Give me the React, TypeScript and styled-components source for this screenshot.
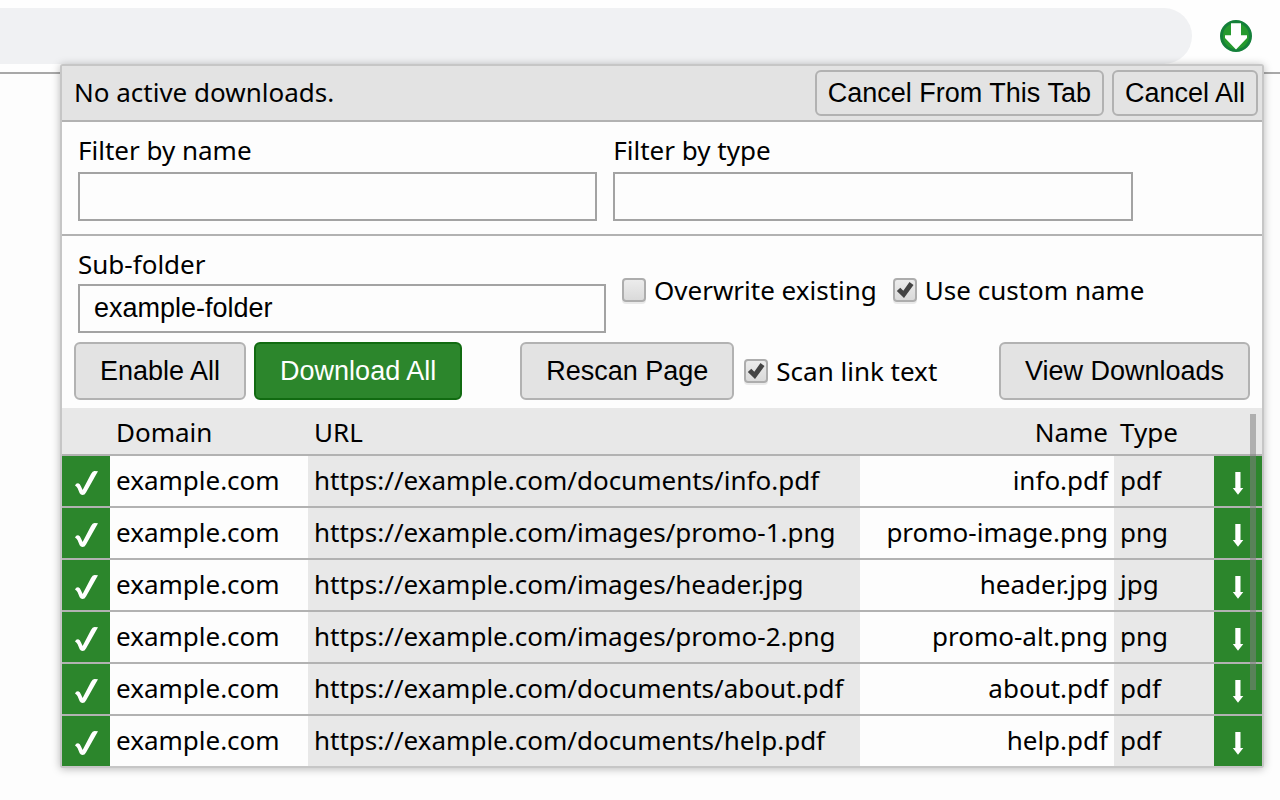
import React from "react";
import styled, { createGlobalStyle } from "styled-components";

const line = "#b2b2b2";
const green = "#2c862c";
const uiFont = '"Noto Sans", "Open Sans", sans-serif';
const controlFont = '"Liberation Sans", Arial, sans-serif';

const GlobalStyle = createGlobalStyle`
  *, *::before, *::after { box-sizing: border-box; }
  body {
    margin: 0;
    background: #fdfdfd;
    color: #000;
    font: 26px/32px ${uiFont};
  }
`;

const BrowserBar = styled.header`
  display: flex;
  align-items: center;
  justify-content: space-between;
  height: 74px;
  padding-right: 28px;
  border-bottom: 2px solid #a8a8a8;
  background: #fefefe;
`;

const AddressBar = styled.div`
  flex: 1;
  height: 56px;
  margin-right: 28px;
  border-radius: 0 28px 28px 0;
  background: #f0f1f3;
`;

const ExtensionButton = styled.button`
  display: flex;
  padding: 0;
  border: 0;
  background: none;
`;

const Popup = styled.main`
  position: relative;
  margin: -10px 16px 32px 60px;
  border: 2px solid #c6c6c6;
  border-radius: 3px;
  background: #fdfdfd;
  box-shadow: 0 1px 8px rgba(0, 0, 0, 0.28);
`;

const StatusBar = styled.section`
  display: flex;
  align-items: center;
  gap: 8px;
  height: 56px;
  padding: 0 4px 0 12px;
  border-bottom: 2px solid ${line};
  background: #e3e3e3;
`;

const StatusText = styled.span`
  flex: 1;
  padding-bottom: 2px;
`;

const Button = styled.button<{ $primary?: boolean; $compact?: boolean }>`
  height: ${(p) => (p.$compact ? 46 : 58)}px;
  padding: 0 ${(p) => (p.$compact ? 11 : 24)}px;
  border: 2px solid ${(p) => (p.$primary ? "#116b11" : line)};
  border-radius: 6px;
  background: ${(p) => (p.$primary ? green : "#e3e3e3")};
  color: ${(p) => (p.$primary ? "#fff" : "#000")};
  font: 27px/32px ${controlFont};
  white-space: nowrap;
`;

const Filters = styled.section`
  display: grid;
  grid-template-columns: 16fr 16fr 3fr;
  gap: 16px;
  padding: 12px 16px 13px;
  border-bottom: 2px solid ${line};
`;

const Field = styled.label<{ $gap: number }>`
  display: flex;
  flex-direction: column;
  gap: ${(p) => p.$gap}px;
`;

const TextInput = styled.input`
  width: 100%;
  height: 49px;
  padding: 0 14px;
  border: 2px solid #a3a3a3;
  border-radius: 0;
  background: #fdfdfd;
  color: #000;
  font: 27px/32px ${controlFont};
`;

const Options = styled.section`
  display: grid;
  gap: 9px;
  padding: 12px 12px 8px;
`;

const FolderRow = styled.div`
  display: grid;
  grid-template-columns: 11fr 13fr;
  align-items: center;
  gap: 16px;
  padding: 0 4px;
`;

const CheckGroup = styled.div`
  display: flex;
  gap: 16px;
  padding-bottom: 2px;
`;

const ActionRow = styled.div`
  display: flex;
  align-items: center;
`;

const ButtonGroup = styled.div`
  display: flex;
  gap: 8px;
  margin-right: 58px;
`;

const ScanGroup = styled.div`
  display: flex;
  flex: 1;
  align-items: center;
  gap: 10px;
`;

const CheckLabel = styled.label`
  display: flex;
  align-items: center;
  gap: 8px;
  white-space: nowrap;
`;

const CheckFrame = styled.span`
  display: grid;
  place-items: center;
  > * { grid-area: 1 / 1; }
  > svg { pointer-events: none; visibility: hidden; }
  > input:checked + svg { visibility: visible; }
`;

const Checkbox = styled.input`
  appearance: none;
  width: 24px;
  height: 24px;
  margin: 0;
  border: 2px solid #adadad;
  border-radius: 4px;
  background: linear-gradient(#ececec, #dadada);
  box-shadow: 0 2px 0 rgba(0, 0, 0, 0.08);
`;

const RowCheckbox = styled.input`
  appearance: none;
  width: 48px;
  height: 50px;
  margin: 0;
`;

const TableArea = styled.section`
  position: relative;
`;

const ScrollThumb = styled.div`
  position: absolute;
  top: 6px;
  right: 6px;
  width: 6px;
  height: 276px;
  background: rgba(128, 128, 128, 0.55);
`;

const Table = styled.table`
  width: 100%;
  table-layout: fixed;
  border-spacing: 0;
`;

const HeadCell = styled.th<{ $right?: boolean }>`
  height: 46px;
  padding: 2px 6px 0;
  background: #e8e8e8;
  font-weight: 400;
  text-align: ${(p) => (p.$right ? "right" : "left")};
`;

const Cell = styled.td<{ $shaded?: boolean; $right?: boolean }>`
  height: 52px;
  padding: 0 6px 2px;
  border-top: 2px solid ${line};
  background: ${(p) => (p.$shaded ? "#e8e8e8" : "#fdfdfd")};
  text-align: ${(p) => (p.$right ? "right" : "left")};
  white-space: nowrap;
`;

const IconCell = styled.td`
  padding: 0;
  border-top: 2px solid ${line};
  background: ${green};
`;

const RowButton = styled.button`
  display: grid;
  place-items: center;
  width: 100%;
  height: 50px;
  padding: 0;
  border: 0;
  background: none;
`;

const Col = styled.col<{ $width?: string }>`
  width: ${(p) => p.$width ?? "auto"};
`;

const ExtensionIcon = () => (
  <svg width="32" height="32" viewBox="0 0 32 32" aria-hidden="true">
    <circle cx="16" cy="16" r="14.5" fill="#269a2e" stroke="#14803a" strokeWidth="3" />
    <path d="M11 3.300h10v12h6v2.700L16 29.500 5 18v-2.700h6z" fill="#fff" />
  </svg>
);

const BoxTick = () => (
  <svg width="24" height="24" viewBox="0 0 24 24" aria-hidden="true">
    <path d="M3.800 13 7.300 9.700 10.300 12.700 16.500 4 20.500 7 11 20z" fill="#444" />
  </svg>
);

const RowTick = () => (
  <svg width="48" height="50" viewBox="0 0 48 50" aria-hidden="true">
    <path
      d="M13 29.500Q14 27 16.200 27.200 18 27.500 19 30.500L20.600 34 29 18Q30.500 15.200 32.500 15L36 15.200 24 36.500Q22.700 39 20.500 39 18.700 39 17.700 37.200L15.600 32.200Q14.800 30.500 13 29.500Z"
      fill="#fff"
    />
  </svg>
);

const RowArrow = () => (
  <svg width="48" height="50" viewBox="0 0 48 50" aria-hidden="true">
    <path d="M21.300 16h5.200v16h2.800L24 38.700 18.800 32h2.500z" fill="#fff" />
  </svg>
);

const CheckOption = ({ label, checked }: { label: string; checked?: boolean }) => (
  <CheckLabel>
    <CheckFrame>
      <Checkbox type="checkbox" defaultChecked={checked} />
      <BoxTick />
    </CheckFrame>
    {label}
  </CheckLabel>
);

const files = [
  { path: "documents/info.pdf", name: "info.pdf", type: "pdf" },
  { path: "images/promo-1.png", name: "promo-image.png", type: "png" },
  { path: "images/header.jpg", name: "header.jpg", type: "jpg" },
  { path: "images/promo-2.png", name: "promo-alt.png", type: "png" },
  { path: "documents/about.pdf", name: "about.pdf", type: "pdf" },
  { path: "documents/help.pdf", name: "help.pdf", type: "pdf" },
];

export default function App() {
  return (
    <>
      <GlobalStyle />
      <BrowserBar>
        <AddressBar />
        <ExtensionButton aria-label="Downloads">
          <ExtensionIcon />
        </ExtensionButton>
      </BrowserBar>
      <Popup>
        <StatusBar>
          <StatusText>No active downloads.</StatusText>
          <Button $compact>Cancel From This Tab</Button>
          <Button $compact>Cancel All</Button>
        </StatusBar>
        <Filters>
          <Field $gap={6}>
            Filter by name
            <TextInput type="text" />
          </Field>
          <Field $gap={6}>
            Filter by type
            <TextInput type="text" />
          </Field>
        </Filters>
        <Options>
          <FolderRow>
            <Field $gap={4}>
              Sub-folder
              <TextInput type="text" defaultValue="example-folder" />
            </Field>
            <CheckGroup>
              <CheckOption label="Overwrite existing" />
              <CheckOption label="Use custom name" checked />
            </CheckGroup>
          </FolderRow>
          <ActionRow>
            <ButtonGroup>
              <Button>Enable All</Button>
              <Button $primary>Download All</Button>
            </ButtonGroup>
            <ScanGroup>
              <Button>Rescan Page</Button>
              <CheckOption label="Scan link text" checked />
            </ScanGroup>
            <Button>View Downloads</Button>
          </ActionRow>
        </Options>
        <TableArea>
          <Table>
            <colgroup>
              <Col $width="48px" />
              <Col $width="198px" />
              <Col />
              <Col $width="254px" />
              <Col $width="100px" />
              <Col $width="48px" />
            </colgroup>
            <thead>
              <tr>
                <HeadCell />
                <HeadCell>Domain</HeadCell>
                <HeadCell>URL</HeadCell>
                <HeadCell $right>Name</HeadCell>
                <HeadCell>Type</HeadCell>
                <HeadCell />
              </tr>
            </thead>
            <tbody>
              {files.map((file) => (
                <tr key={file.path}>
                  <IconCell>
                    <CheckFrame>
                      <RowCheckbox type="checkbox" defaultChecked aria-label={`Enable ${file.name}`} />
                      <RowTick />
                    </CheckFrame>
                  </IconCell>
                  <Cell>example.com</Cell>
                  <Cell $shaded>https://example.com/{file.path}</Cell>
                  <Cell $right>{file.name}</Cell>
                  <Cell $shaded>{file.type}</Cell>
                  <IconCell>
                    <RowButton aria-label={`Download ${file.name}`}>
                      <RowArrow />
                    </RowButton>
                  </IconCell>
                </tr>
              ))}
            </tbody>
          </Table>
          <ScrollThumb />
        </TableArea>
      </Popup>
    </>
  );
}
